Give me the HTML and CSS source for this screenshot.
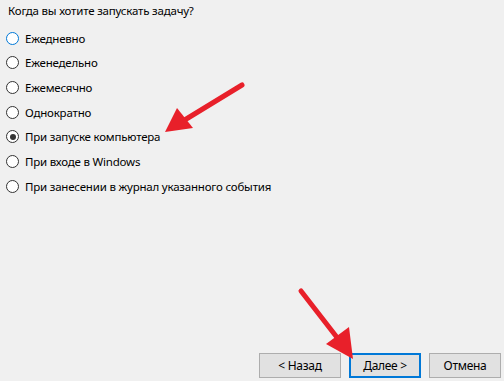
FILE: index.html
```html
<!DOCTYPE html>
<html lang="ru">
<head>
    <meta charset="UTF-8">
    <title>Мастер создания задачи</title>
    <link rel="stylesheet" href="styles.css">
</head>
<body>

    <div class="wizard">
        <p class="question">Когда вы хотите запускать задачу?</p>

        <div class="options">
            <label class="option"><span class="radio focus"></span>Ежедневно</label>
            <label class="option"><span class="radio"></span>Еженедельно</label>
            <label class="option"><span class="radio"></span>Ежемесячно</label>
            <label class="option"><span class="radio"></span>Однократно</label>
            <label class="option"><span class="radio checked"></span>При запуске компьютера</label>
            <label class="option"><span class="radio"></span>При входе в Windows</label>
            <label class="option"><span class="radio"></span>При занесении в журнал указанного события</label>
        </div>

        <div class="buttons">
            <button class="btn btn-back">&lt; Назад</button>
            <button class="btn btn-next">Далее &gt;</button>
            <button class="btn">Отмена</button>
        </div>
    </div>

    <!-- red arrows drawn over the screenshot -->
    <svg class="arrows" width="504" height="381" viewBox="0 0 504 381">
        <line x1="242" y1="85" x2="183" y2="121" stroke="#e8202a" stroke-width="5" stroke-linecap="round"/>
        <polygon points="165,132 177,108 193,128" fill="#e8202a"/>
        <line x1="301" y1="291" x2="339" y2="340" stroke="#e8202a" stroke-width="5" stroke-linecap="round"/>
        <polygon points="353,359 326,344 349,327" fill="#e8202a"/>
    </svg>

</body>
</html>
```

FILE: styles.css
```css
body {
    margin: 0;
    background-color: #f0f0f0;
    font-family: "Noto Sans", "Open Sans", Arial, sans-serif;
    font-size: 11.5px;
    letter-spacing: -0.2px;
    color: #000;
}

.wizard {
    height: 381px;
    box-sizing: border-box;
    padding: 3px 3px 3px 0;
    display: flex;
    flex-direction: column;
}

.question {
    margin: 0 0 7px 8px;
    line-height: 16px;
}

.options {
    display: flex;
    flex-direction: column;
}

.option {
    height: 24.67px;
    display: flex;
    align-items: center;
    padding-left: 6px;
}

.radio {
    width: 11px;
    height: 11px;
    border: 1px solid #333;
    border-radius: 50%;
    background: #fff;
    margin-right: 6px;
    position: relative;
    flex-shrink: 0;
}

.radio.focus {
    border-color: #0078d7;
}

.radio.checked::after {
    content: "";
    position: absolute;
    left: 2.5px;
    top: 2.5px;
    width: 6px;
    height: 6px;
    border-radius: 50%;
    background: #333;
}

.buttons {
    margin-top: auto;
    display: flex;
    justify-content: flex-end;
    gap: 8px;
}

.btn {
    width: 72px;
    height: 25px;
    background: #e1e1e1;
    border: 1px solid #adadad;
    font-family: inherit;
    font-size: 12px;
    letter-spacing: -0.3px;
    color: #000;
    padding: 0;
}

.btn-back {
    width: 82px;
}

.btn-next {
    border: 2px solid #0078d7;
}

.arrows {
    position: absolute;
    left: 0;
    top: 0;
    pointer-events: none;
}
```
